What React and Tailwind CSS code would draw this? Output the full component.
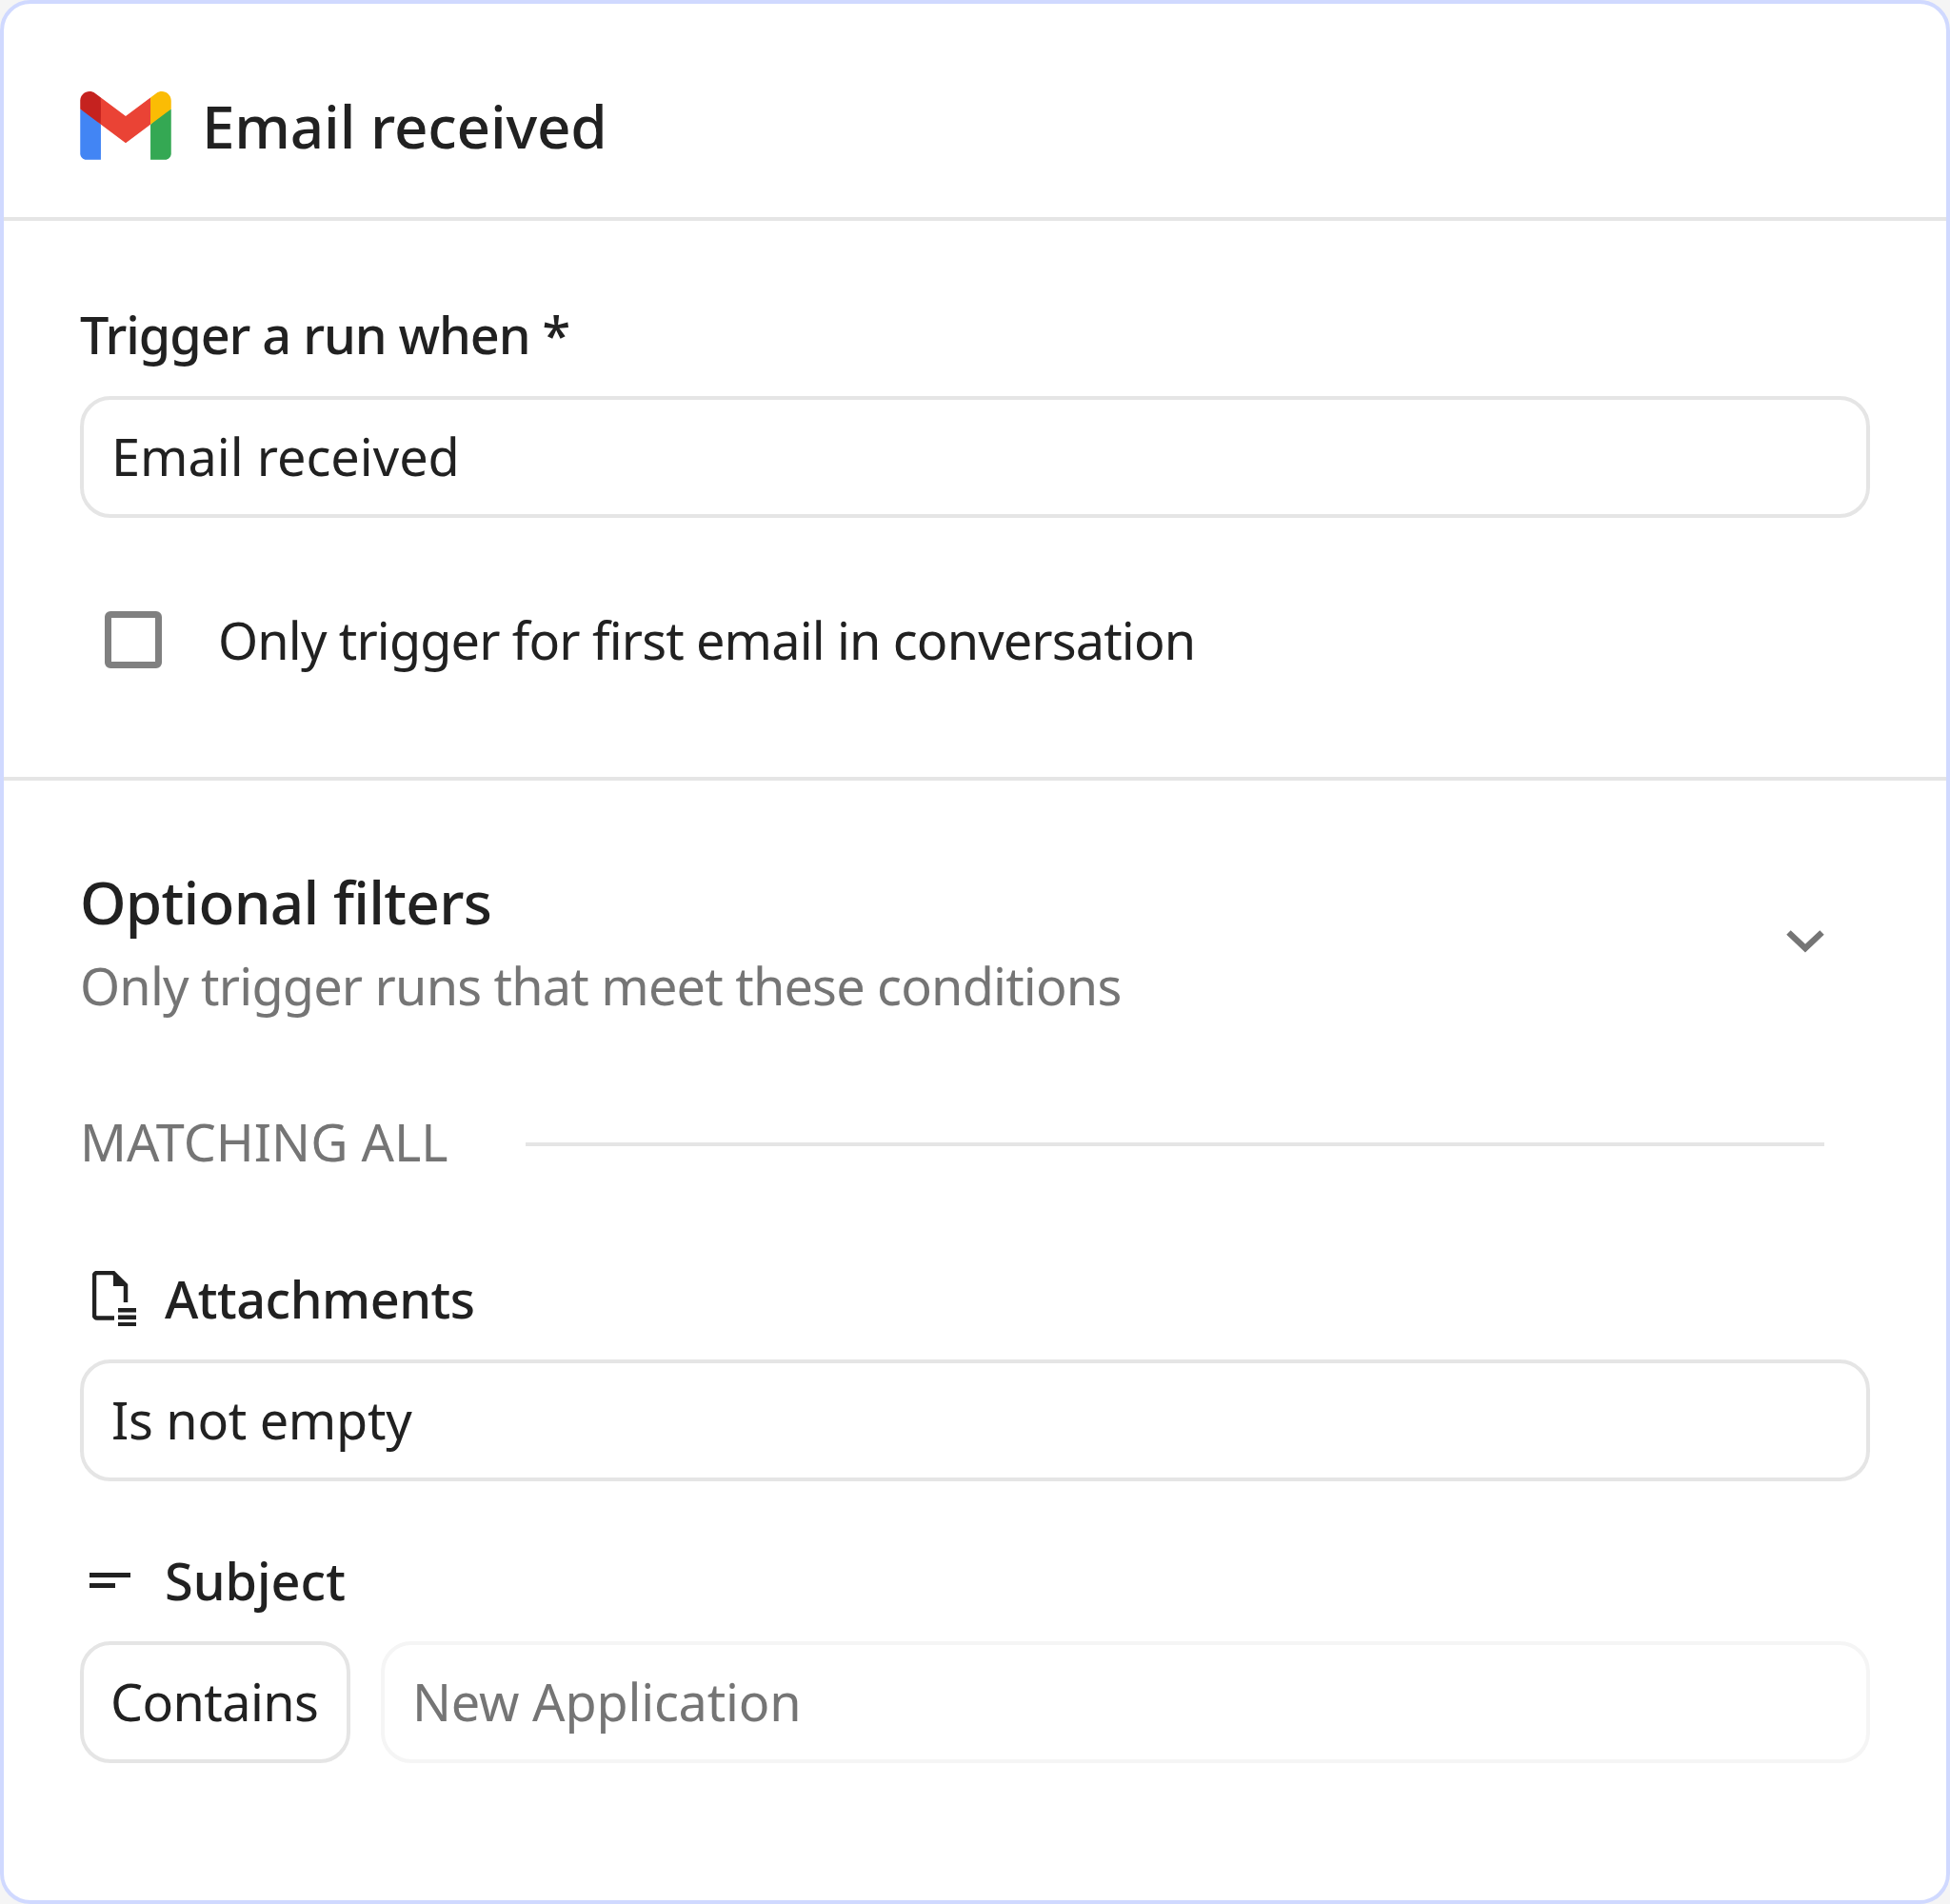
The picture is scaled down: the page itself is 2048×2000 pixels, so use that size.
const FileIcon = () => (
  <svg viewBox="0 0 46 58" className="w-[46px] h-[58px] ml-[13px] shrink-0">
    <path d="M23 49.5H5a3 3 0 0 1-3-3V5a3 3 0 0 1 3-3h17L35 15v18" fill="none" stroke="#212121" strokeWidth="4.5" />
    <path d="M22 1l14.500 15H22z" fill="#212121" />
    <path d="M27 39h19v4.500H27zM27 46.500h19V51H27zM27 54h19v4H27z" fill="#212121" />
  </svg>
);

const TextIcon = () => (
  <svg viewBox="0 0 43 16" className="w-[43px] h-[16px] ml-[10px] shrink-0">
    <path d="M0 0h43v5H0zM0 11h27v5H0z" fill="#212121" />
  </svg>
);

const GmailLogo = () => (
  <svg viewBox="0 0 256 193" className="w-[96px] h-[72px] shrink-0">
    <path fill="#4285F4" d="M58.182 192.05V93.14L27.507 65.077 0 49.504v125.091c0 9.658 7.825 17.455 17.455 17.455h40.727Z" />
    <path fill="#34A853" d="M197.818 192.05h40.727c9.659 0 17.455-7.826 17.455-17.455V49.505l-31.156 17.837-27.026 25.798v98.91Z" />
    <path fill="#EA4335" d="m58.182 93.14-4.174-38.647 4.174-36.989L128 69.868l69.818-52.364 4.669 34.992-4.669 40.644L128 145.504z" />
    <path fill="#FBBC04" d="M197.818 17.504V93.14L256 49.504V26.231c0-21.585-24.64-33.89-41.89-20.945l-16.292 12.218Z" />
    <path fill="#C5221F" d="M0 49.504l26.759 20.07L58.182 93.14V17.504L41.89 5.286C24.61-7.66 0 4.646 0 26.23v23.273Z" />
  </svg>
);

const Field = ({ children, className = "" }) => (
  <div className={`h-[128px] flex items-center px-[29px] pb-[2px] border-4 rounded-[32px] ${className}`}>
    {children}
  </div>
);

export default function App() {
  return (
    <div className="w-[2048px] h-[2000px] bg-[#f5f5f5]">
      <div className="w-full h-full bg-white border-4 border-[#d0d9ff] rounded-[32px] text-[54px] leading-[72px] text-[#212121] font-['Noto_Sans',sans-serif]">
        <div className="h-[228px] border-b-4 border-[#e5e5e5] flex items-center gap-[32px] px-[80px] pt-[31px]">
          <GmailLogo />
          <h1 className="text-[62px] leading-[80px] font-medium tracking-[-0.2px]">Email received</h1>
        </div>

        <div className="h-[588px] border-b-4 border-[#e5e5e5] px-[80px] pt-[83px]">
          <label className="block font-medium tracking-[-1.07px]">Trigger a run when *</label>
          <Field className="mt-[29px] border-[#e5e5e5]">Email received</Field>
          <div className="mt-[92px] flex items-center gap-[59px] pl-[26px]">
            <div className="w-[60px] h-[60px] border-[7px] border-[#808080] rounded-[6px]" />
            <span className="tracking-[-0.86px]">Only trigger for first email in conversation</span>
          </div>
        </div>

        <div className="px-[80px]">
          <div className="pt-[87px] flex items-center justify-between pr-[48px]">
            <div>
              <h2 className="text-[62px] leading-[80px] font-medium tracking-[-0.74px]">Optional filters</h2>
              <p className="mt-[12px] text-[#757575] tracking-[-0.8px]">Only trigger runs that meet these conditions</p>
            </div>
            <svg viewBox="0 0 40 24" className="w-[40px] h-[24px] shrink-0">
              <path d="M2.500 2.500L20 19 37.500 2.500" fill="none" stroke="#757575" strokeWidth="6.500" />
            </svg>
          </div>

          <div className="mt-[92px] flex items-center pr-[48px] text-[#757575]">
            <span>MATCHING ALL</span>
            <div className="ml-auto mt-[6px] w-[1364px] h-[4px] bg-[#e5e5e5]" />
          </div>

          <div className="mt-[93px] flex items-center gap-[30px] font-medium">
            <FileIcon />
            <span className="tracking-[-0.5px]">Attachments</span>
          </div>
          <Field className="mt-[28px] border-[#e5e5e5] tracking-[-0.3px]">Is not empty</Field>

          <div className="mt-[68px] flex items-center gap-[36px] font-medium">
            <TextIcon />
            <span>Subject</span>
          </div>
          <div className="mt-[28px] flex gap-[32px]">
            <Field className="w-[284px] shrink-0 border-[#e5e5e5] tracking-[-0.6px] pl-[28px]">Contains</Field>
            <Field className="flex-1 border-[#f5f5f5] text-[#757575] tracking-[-0.2px]">New Application</Field>
          </div>
        </div>
      </div>
    </div>
  );
}
